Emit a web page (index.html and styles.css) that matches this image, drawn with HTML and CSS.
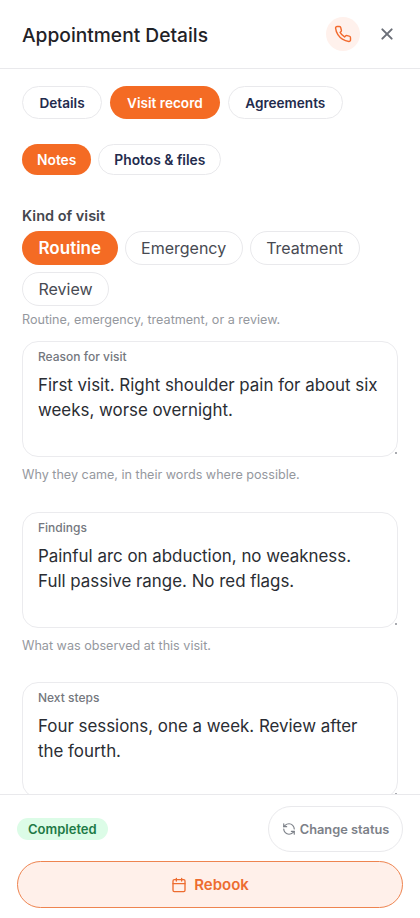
FILE: index.html
```html
<!DOCTYPE html>
<html lang="en">
<head>
<meta charset="utf-8">
<title>Appointment Details</title>
<link rel="stylesheet" href="styles.css">
</head>
<body>
<div class="sheet">
  <header class="head">
    <h1 class="title">Appointment Details</h1>
    <button class="call" aria-label="Call">
      <svg width="18" height="18" viewBox="0 0 24 24" fill="none" stroke="currentColor" stroke-width="1.9" stroke-linecap="round" stroke-linejoin="round"><path d="M22 16.92v3a2 2 0 0 1-2.18 2 19.79 19.79 0 0 1-8.63-3.07 19.5 19.5 0 0 1-6-6 19.79 19.79 0 0 1-3.07-8.67A2 2 0 0 1 4.11 2h3a2 2 0 0 1 2 1.72c.13.96.36 1.9.7 2.81a2 2 0 0 1-.45 2.11L8.09 9.91a16 16 0 0 0 6 6l1.27-1.27a2 2 0 0 1 2.11-.45c.91.34 1.85.57 2.81.7A2 2 0 0 1 22 16.92z"/></svg>
    </button>
    <button class="close" aria-label="Close">
      <svg width="16" height="16" viewBox="0 0 24 24" fill="none" stroke="currentColor" stroke-width="3" stroke-linecap="round"><path d="M5 5l14 14M19 5L5 19"/></svg>
    </button>
  </header>
  <main class="body">
    <nav class="tabs">
      <span class="tab">Details</span>
      <span class="tab on">Visit record</span>
      <span class="tab">Agreements</span>
    </nav>
    <nav class="subtabs">
      <span class="sub on">Notes</span>
      <span class="sub">Photos &amp; files</span>
    </nav>
    <div class="label">Kind of visit</div>
    <div class="chips">
      <span class="chip on">Routine</span>
      <span class="chip">Emergency</span>
      <span class="chip">Treatment</span>
      <span class="chip">Review</span>
    </div>
    <p class="hint first">Routine, emergency, treatment, or a review.</p>
    <label class="field">
      <span class="float">Reason for visit</span>
      <textarea class="area">First visit. Right shoulder pain for about six weeks, worse overnight.</textarea>
    </label>
    <p class="hint">Why they came, in their words where possible.</p>
    <label class="field">
      <span class="float">Findings</span>
      <textarea class="area">Painful arc on abduction, no weakness. Full passive range. No red flags.</textarea>
    </label>
    <p class="hint">What was observed at this visit.</p>
    <label class="field">
      <span class="float">Next steps</span>
      <textarea class="area">Four sessions, one a week. Review after the fourth.</textarea>
    </label>
  </main>
  <footer class="foot">
    <div class="status">
      <span class="badge">Completed</span>
      <button class="change">
        <svg width="14" height="14" viewBox="0 0 24 24" fill="none" stroke="currentColor" stroke-width="2" stroke-linecap="round" stroke-linejoin="round"><path d="M21 12a9 9 0 0 0-9-9 9.75 9.75 0 0 0-6.74 2.74L3 8"/><path d="M3 3v5h5"/><path d="M3 12a9 9 0 0 0 9 9 9.75 9.75 0 0 0 6.74-2.74L21 16"/><path d="M16 16h5v5"/></svg>
        Change status
      </button>
    </div>
    <button class="rebook">
      <svg width="16" height="16" viewBox="0 0 24 24" fill="none" stroke="currentColor" stroke-width="2" stroke-linecap="round" stroke-linejoin="round"><rect x="3" y="4" width="18" height="18" rx="2"/><path d="M16 2v4M8 2v4M3 10h18"/></svg>
      Rebook
    </button>
  </footer>
</div>
</body>
</html>
```
FILE: styles.css
```css
* { box-sizing: border-box; }
html, body { margin: 0; height: 100%; }
body { background: #fff; font-family: Inter, "Liberation Sans", sans-serif; color: #1f2430; }
button { font-family: inherit; cursor: pointer; }
.sheet { width: 420px; height: 918px; display: flex; flex-direction: column; overflow: hidden; }
.head { height: 69px; flex: none; display: flex; align-items: center; padding: 0 22px; border-bottom: 1px solid #e9e9ec; }
.title { flex: 1; margin: 0; padding-top: 2px; font-size: 19.2px; font-weight: 500; color: #1f2227; }
.call { width: 34px; height: 34px; border: 0; border-radius: 50%; background: #fff1ec; color: #f26a2e; display: flex; align-items: center; justify-content: center; padding: 0; }
.close { width: 16px; height: 16px; border: 0; background: none; color: #6b6f78; margin-left: 19px; margin-right: 3px; padding: 0; display: flex; }
.body { flex: 1; min-height: 0; overflow: hidden; padding: 17px 22px 0; }
.tabs { display: flex; gap: 7.5px; }
.tab { height: 33px; padding: 0 16.5px; display: flex; align-items: center; border: 1px solid #e9e9ec; border-radius: 17px; font-size: 13.6px; font-weight: 600; color: #232b4d; }
.tab.on, .sub.on, .chip.on { background: #f46b24; border: 0; color: #fff; }
.tab.on { padding: 0 17.5px; }
.subtabs { display: flex; gap: 7px; margin-top: 25px; }
.sub { height: 31px; padding: 0 15px; display: flex; align-items: center; border: 1px solid #e9e9ec; border-radius: 16px; font-size: 13.8px; font-weight: 600; color: #232b4d; }
.sub.on { padding: 0 15px; }
.label { margin-top: 32px; font-size: 14.5px; font-weight: 600; line-height: 17px; color: #44474e; }
.chips { display: flex; flex-wrap: wrap; gap: 6.5px 7px; margin-top: 7px; }
.chip { height: 34px; padding: 0 15.5px; display: flex; align-items: center; border: 1px solid #e9e9ec; border-radius: 17px; font-size: 16px; color: #474a52; }
.chip.on { padding: 0 16.5px; font-size: 17px; font-weight: 600; }
.hint { margin: 10px 0 0; font-size: 12.6px; line-height: 16px; color: #95989e; }
.hint.first { margin-top: 6.5px; }
.field { display: block; position: relative; margin-top: 28.5px; }
.field::after { content: ""; position: absolute; right: 1.5px; bottom: 3px; width: 2px; height: 2px; background: #a9abb0; }
.hint.first + .field { margin-top: 13px; }
.float { position: absolute; left: 16px; top: 9px; font-size: 12px; font-weight: 500; line-height: 14px; color: #74777e; }
.area { display: block; width: 100%; height: 116px; padding: 31px 15px 0; border: 1px solid #ebebee; border-radius: 16px; font-family: inherit; font-size: 16.9px; line-height: 25px; color: #2a2d33; background: #fff; resize: none; outline: 0; overflow: hidden; }
.foot { flex: none; border-top: 1px solid #e9e9ec; padding: 11px 17px 10px; background: #fff; }
.status { display: flex; align-items: center; justify-content: space-between; }
.badge { height: 22px; padding: 0 11px; display: flex; align-items: center; border-radius: 11px; background: #dcfce7; color: #1e7a46; font-size: 13px; font-weight: 600; }
.change { width: 135px; height: 46px; border: 1px solid #e9e9ec; border-radius: 23px; background: #fff; color: #7c8088; font-size: 12.8px; font-weight: 600; display: flex; align-items: center; justify-content: center; gap: 4px; padding: 0; }
.rebook { width: 100%; height: 47px; margin-top: 9px; border: 1px solid #ee8450; border-radius: 24px; background: #fff0ea; color: #ed6c30; font-size: 15px; font-weight: 600; display: flex; align-items: center; justify-content: center; gap: 7px; padding: 0; }
```
